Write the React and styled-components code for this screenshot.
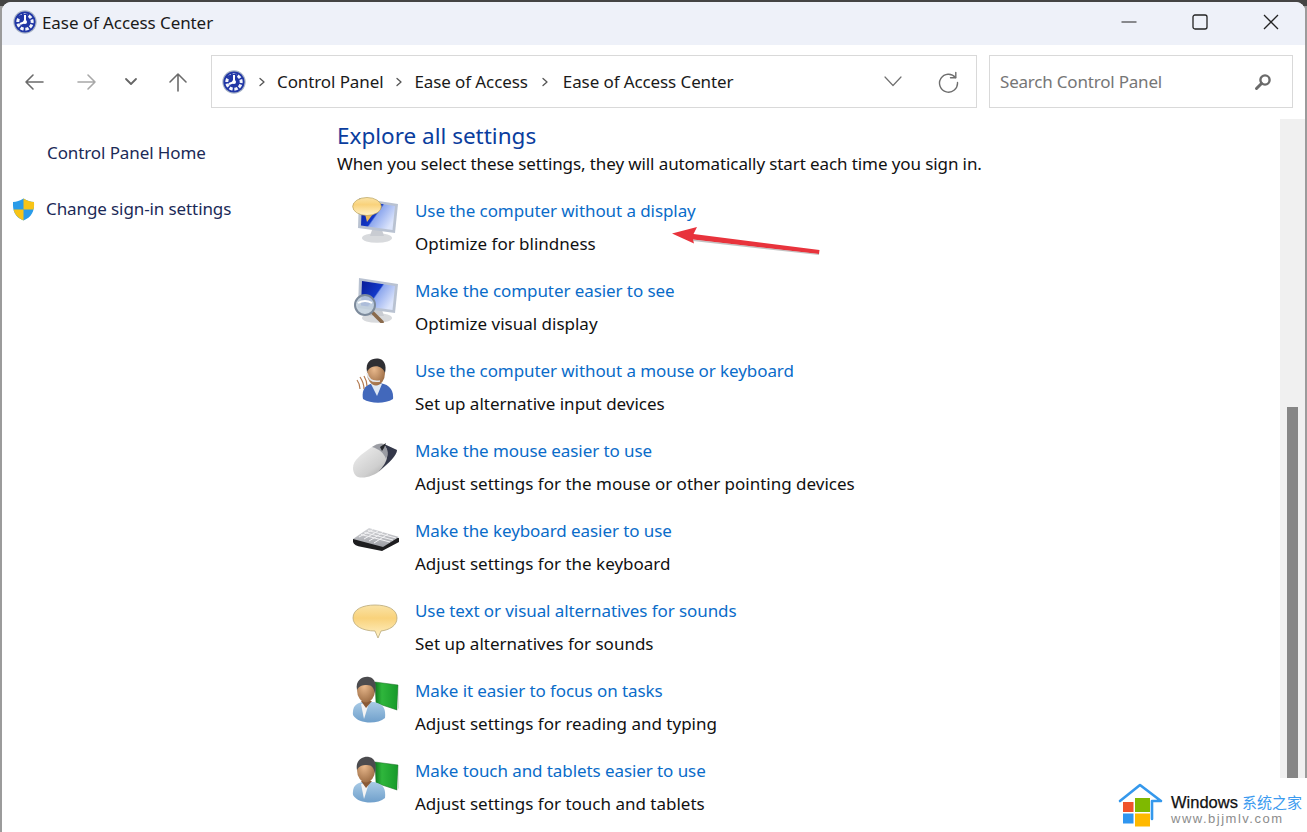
import React from "react";
import styled, { createGlobalStyle } from "styled-components";

const Global = createGlobalStyle`
  html, body { margin: 0; padding: 0; height: 100%; background: #4a4a4a; overflow: hidden; }
  #root { height: 100%; }
  * { box-sizing: border-box; }
`;
const font = `"Noto Sans", "Open Sans", "Liberation Sans", sans-serif`;

const Stage = styled.div`
  position: relative; width: 1307px; height: 832px; overflow: hidden;
  padding: 2px 2px 0 2px; background: linear-gradient(#444 0 6px, #9b9b9b 6px);
  font-family: ${font};
`;
const Win = styled.div`
  width: 100%; height: 100%; background: #fff; border-radius: 9px 9px 0 0; overflow: hidden;
  display: flex; flex-direction: column;
`;
const TitleBar = styled.div`
  height: 43px; flex: none; background: #eef1f9; display: flex; align-items: center; padding: 0 0 3px 11px;
`;
const TitleText = styled.div`
  font-size: 17px; color: #1a1a1a; margin-left: 5px; letter-spacing: -0.08px; flex: 1;
`;
const WinBtn = styled.div`
  width: 71px; height: 40px; display: flex; align-items: center; justify-content: center;
`;
const WinBtns = styled.div`
  display: flex; margin-right: -1px;
`;
const NavBar = styled.div`
  height: 74px; flex: none; display: flex; align-items: flex-start; padding: 10px 12px 0 0;
`;
const NavBtns = styled.div`
  width: 209px; height: 53px; flex: none; display: flex; align-items: center; padding-left: 12px; gap: 12px;
`;
const NavBtn = styled.div`
  flex: none; width: ${p => p.$w}px; height: 53px; display: flex; align-items: center; justify-content: center;
`;
const AddrBar = styled.div`
  width: 766px; height: 53px; flex: none; border: 1px solid #d9d9d9; display: flex; align-items: center; padding-left: 10px;
`;
const Crumb = styled.span`
  font-size: 17px; color: #1a1a1a; letter-spacing: -0.1px; white-space: nowrap;
`;
const Sep = styled.span`
  display: flex; width: ${p => p.$w || 33}px; justify-content: center; align-items: center;
`;
const AddrTools = styled.div`
  margin-left: auto; display: flex; align-items: center; gap: 35px; padding-right: 17px;
`;
const SearchBox = styled.div`
  width: 304px; height: 53px; margin-left: 12px; flex: none; border: 1px solid #d9d9d9; display: flex; align-items: center;
  justify-content: space-between; padding: 0 20px 0 10px;
`;
const SearchText = styled.span`
  font-size: 17px; color: #767676; letter-spacing: -0.2px;
`;
const Body = styled.div`
  flex: 1; min-height: 0; display: flex;
`;
const Sidebar = styled.div`
  width: 335px; flex: none; padding-top: 17px; display: flex; flex-direction: column;
`;
const SideHome = styled.div`
  font-size: 17px; color: #1b2a57; letter-spacing: -0.1px; padding-left: 45px; line-height: 34px;
`;
const SideLink = styled.div`
  display: flex; align-items: center; margin-top: 22px; padding-left: 10px; gap: 11px;
  font-size: 17px; color: #1b2a57; letter-spacing: -0.1px; line-height: 34px;
`;
const Main = styled.div`
  flex: 1; padding-top: 2px; min-width: 0;
`;
const Heading = styled.div`
  font-size: 22.5px; line-height: 29px; color: #0a3d9e;
`;
const Sub = styled.div`
  font-size: 17px; line-height: 28px; color: #111; letter-spacing: -0.1px; margin-bottom: 16px;
`;
const Rows = styled.div`
  display: flex; flex-direction: column; gap: 14px; padding-left: 15px;
`;
const Row = styled.div`
  display: flex; height: 66px;
`;
const IconCell = styled.div`
  width: 63px; flex: none; height: 48px; margin-top: 1px;
`;
const RowLink = styled.div`
  font-size: 17px; line-height: 33px; color: #0a6cc9; letter-spacing: -0.08px; white-space: nowrap;
`;
const RowDesc = styled.div`
  font-size: 17px; line-height: 33px; color: #111; white-space: nowrap;
`;
const Track = styled.div`
  width: 25px; flex: none; background: #f0f0f0; padding: 288px 7px 0 7px;
`;
const Thumb = styled.div`
  height: 100%; background: #868686;
`;
const ArrowLayer = styled.svg`
  position: absolute; left: 665px; top: 220px; width: 160px; height: 40px;
`;
const Mark = styled.div`
  position: absolute; right: 0; bottom: 0; width: 197px; height: 54px; background: linear-gradient(90deg, rgba(255,255,255,0), #fff 8px);
  display: flex; padding: 5px 0 0 8px;
`;
const MarkText = styled.div`
  margin-left: 8px; padding-top: 10px; display: flex; flex-direction: column;
`;
const MarkTop = styled.div`
  display: flex; align-items: baseline; white-space: nowrap; line-height: 18px;
`;
const MarkWin = styled.span`
  font-family: "Liberation Sans", sans-serif; font-size: 16.5px; color: #111;
  -webkit-text-stroke: 0.25px #111;
`;
const MarkCn = styled.span`
  font-family: "Noto Sans CJK SC", sans-serif; font-size: 15px; color: #3c9bef; margin-left: 4px;
`;
const MarkUrl = styled.span`
  font-family: "Liberation Sans", sans-serif; font-size: 13px; color: #8c8c8c; letter-spacing: 1.5px; line-height: 16px;
`;

const AccessIcon = () => (
  <svg width="24" height="24" viewBox="0 0 24 24" style={{ flex: "none" }}>
    <circle cx="12" cy="12" r="11.7" fill="#a9b4c6" />
    <circle cx="12" cy="12" r="10.6" fill="#2137a6" />
    <circle cx="12" cy="12" r="7.2" fill="none" stroke="#fff" strokeWidth="3" strokeDasharray="3.4 1.6" transform="rotate(20 12 12)" opacity=".95" />
    <path d="M4 6 L12 12 L15 3 Z" fill="#2137a6" />
    <path d="M12 5 V12 L7 14" fill="none" stroke="#fff" strokeWidth="2" />
    <circle cx="12" cy="12" r="2" fill="#fff" />
  </svg>
);

const Line = ({ d, c = "#6e6e6e", w = 1.6 }) => (
  <path d={d} fill="none" stroke={c} strokeWidth={w} strokeLinecap="round" strokeLinejoin="round" />
);
const Ico = ({ w = 20, h = 20, children }) => (
  <svg width={w} height={h} viewBox={`0 0 ${w} ${h}`}>{children}</svg>
);

const Defs = () => (
  <svg width="0" height="0" style={{ position: "absolute" }}>
    <defs>
      <linearGradient id="screen" x1="0" y1="0" x2="1" y2=".6">
        <stop offset="0" stopColor="#0a1c96" /><stop offset=".52" stopColor="#1238c8" /><stop offset=".56" stopColor="#8ea8ee" /><stop offset="1" stopColor="#dbe4fb" />
      </linearGradient>
      <linearGradient id="bubble" x1="0" y1="0" x2="0" y2="1">
        <stop offset="0" stopColor="#fae3a6" /><stop offset=".4" stopColor="#f9d27b" /><stop offset="1" stopColor="#fff2c8" />
      </linearGradient>
      <linearGradient id="silver" x1="0" y1="0" x2="1" y2="1">
        <stop offset="0" stopColor="#f4f4f4" /><stop offset=".6" stopColor="#cfcfcf" /><stop offset="1" stopColor="#8d8d8d" />
      </linearGradient>
      <linearGradient id="keys" x1="0" y1="0" x2="0" y2="1">
        <stop offset="0" stopColor="#d6d7da" /><stop offset="1" stopColor="#9c9ea4" />
      </linearGradient>
      <linearGradient id="shirt" x1="0" y1="0" x2="0" y2="1">
        <stop offset="0" stopColor="#a9cbe6" /><stop offset="1" stopColor="#6f9fcb" />
      </linearGradient>
      <linearGradient id="book" x1="0" y1="0" x2="1" y2="0">
        <stop offset="0" stopColor="#0d7a1e" /><stop offset=".3" stopColor="#2fb63c" /><stop offset="1" stopColor="#17992a" />
      </linearGradient>
      <radialGradient id="skin" cx=".4" cy=".35" r=".7">
        <stop offset="0" stopColor="#e9b98d" /><stop offset="1" stopColor="#9a6a42" />
      </radialGradient>
    </defs>
  </svg>
);

const Monitor = () => (
  <>
    <ellipse cx="25" cy="43" rx="15" ry="4.8" fill="#d8dadd" />
    <path d="M20 35 h10 l2 6 h-14 z" fill="#c9ccd2" />
    <path d="M7 3 L46 9 L43 38 L6 33 Z" fill="#b9c2d1" />
    <path d="M10 6 L43 11 L40.5 35 L9 30.5 Z" fill="url(#screen)" />
  </>
);
const BlindIcon = () => (
  <svg width="48" height="48" viewBox="0 0 48 48">
    <Monitor />
    <path d="M13 19 L15 27 L21 19 Z" fill="#e9b85a" />
    <ellipse cx="15" cy="11.5" rx="14.3" ry="9" fill="url(#bubble)" stroke="#b9a05a" strokeWidth=".7" />
  </svg>
);
const SeeIcon = () => (
  <svg width="48" height="48" viewBox="0 0 48 48">
    <Monitor />
    <path d="M21 38 L30 47" stroke="#8a6a4c" strokeWidth="3.6" strokeLinecap="round" />
    <circle cx="13" cy="30" r="10" fill="#c3d0dd" fillOpacity=".88" stroke="#7c8a9b" strokeWidth="2" />
    <path d="M6 28 q7 -4 14 0" stroke="#fff" strokeWidth="2" fill="none" />
  </svg>
);
const VoiceIcon = () => (
  <svg width="48" height="48" viewBox="0 0 48 48">
    <path d="M11 44 C9 33 15 28 25 28 C36 28 42 34 41 44 C33 49 19 49 11 44 Z" fill="#4268bb" />
    <path d="M19 29 L25 41 L30 29 Z" fill="#dfe8f4" />
    <ellipse cx="24" cy="18" rx="9" ry="12.5" fill="url(#skin)" />
    <path d="M15 17 C13 6 20 3 26 3.5 C32 4 35 10 33 18 C31 12 25 10 20 12 C17 13 16 15 15 17 Z" fill="#2f2f33" />
    <path d="M15 18 q2 10 13 8" fill="none" stroke="#e4e7ec" strokeWidth="1.5" />
    <path d="M12 21 q3 5 3 10 M8 22 q4 6 4 12 M5 25 q3 4 3 9" fill="none" stroke="#b3794e" strokeWidth="1.2" />
  </svg>
);
const MouseIcon = () => (
  <svg width="48" height="48" viewBox="0 0 48 48">
    <path d="M1 33 C1 25 10 19 17 14 C22 10 26 8 30 8 L45 15 C45 20 37 28 29 35 C22 41 12 44 6 42 C3 41 1 37 1 33 Z" fill="url(#silver)" />
    <path d="M32 9 L45 15 C45 20 37 28 27 36 C32 31 40 21 32 9 Z" fill="#34384a" />
    <path d="M20 12 C24 9 28 8 31 9 C36 13 37 18 34 24 C32 18 27 14 20 12 Z" fill="#9a9ca3" />
    <path d="M28 12 l6 -4 l-2 5 l-2 3 z" fill="#25272c" />
  </svg>
);
const KeyboardIcon = () => (
  <svg width="48" height="48" viewBox="0 0 48 48">
    <path d="M1 24 L1 27 Q2 31 10 32 L30 36 L47 27 L47 23 Z" fill="#1d1d1f" />
    <path d="M1 24 L17 13 L47 22 L31 32 Z" fill="url(#keys)" />
    <path d="M7 22 L21 14.5 M12 24 L26 16 M17 26 L31 17.5 M22 28 L36 19 M9 19.5 L38 27 M12.5 17.5 L41 25 M16 15.5 L44 23" stroke="#f2f2f4" strokeWidth="1" />
  </svg>
);
const BubbleIcon = () => (
  <svg width="48" height="48" viewBox="0 0 48 48">
    <path d="M23 10 C35 10 45 14 45 23 C45 31 37 35 29 36 L26 43 L23 36 C11 36 1 31 1 23 C1 14 11 10 23 10 Z" fill="url(#bubble)" stroke="#b9a878" strokeWidth=".8" />
  </svg>
);
const PersonBookIcon = () => (
  <svg width="48" height="48" viewBox="0 0 48 48">
    <path d="M23 7 L46 10 L45 35 L24 28 Z" fill="url(#book)" stroke="#1a6b24" strokeWidth=".5" />
    <path d="M45 36 L46.5 11 L47 33 Z" fill="#dcdcdc" />
    <path d="M1 40 C0 30 6 28 10 27 L22 27 C31 29 34 33 33 43 C25 50 6 49 1 40 Z" fill="url(#shirt)" />
    <path d="M9 29 L12 44 L17 28 Z" fill="#f3f3f3" />
    <path d="M9 26 L14 33 L20 26 Z" fill="#8a5a36" />
    <ellipse cx="14" cy="15" rx="9" ry="12.5" fill="url(#skin)" />
    <path d="M5 15 C3 5 11 1 17 2 C23 3 25 9 23 19 C22 13 20 10 15 10 C10 10 7 11 5 15 Z" fill="#4b4b4e" />
  </svg>
);

const rows = [
  [BlindIcon, "Use the computer without a display", "Optimize for blindness"],
  [SeeIcon, "Make the computer easier to see", "Optimize visual display"],
  [VoiceIcon, "Use the computer without a mouse or keyboard", "Set up alternative input devices"],
  [MouseIcon, "Make the mouse easier to use", "Adjust settings for the mouse or other pointing devices"],
  [KeyboardIcon, "Make the keyboard easier to use", "Adjust settings for the keyboard"],
  [BubbleIcon, "Use text or visual alternatives for sounds", "Set up alternatives for sounds"],
  [PersonBookIcon, "Make it easier to focus on tasks", "Adjust settings for reading and typing"],
  [PersonBookIcon, "Make touch and tablets easier to use", "Adjust settings for touch and tablets"],
];

const Chev = () => (
  <Ico w={8} h={12}><Line d="M2 2.5 L6 6 L2 9.5" c="#555" w={1.3} /></Ico>
);

export default function App() {
  return (
    <Stage>
      <Global />
      <Defs />
      <Win>
        <TitleBar>
          <AccessIcon />
          <TitleText>Ease of Access Center</TitleText>
          <WinBtns>
            <WinBtn><Ico w={16} h={4}><path d="M0.5 2 H15.5" stroke="#222" strokeWidth="1.2" /></Ico></WinBtn>
            <WinBtn><Ico w={16} h={16}><rect x="1" y="1" width="14" height="14" rx="2" fill="none" stroke="#222" strokeWidth="1.3" /></Ico></WinBtn>
            <WinBtn><Ico w={16} h={16}><path d="M1 1 L15 15 M15 1 L1 15" stroke="#222" strokeWidth="1.3" /></Ico></WinBtn>
          </WinBtns>
        </TitleBar>
        <NavBar>
          <NavBtns>
            <NavBtn $w={40}><Ico w={20} h={18}><Line d="M19 9 H2 M9 2 L2 9 L9 16" c="#6b6b6b" /></Ico></NavBtn>
            <NavBtn $w={41}><Ico w={20} h={18}><Line d="M1 9 H18 M11 2 L18 9 L11 16" c="#a8a8a8" /></Ico></NavBtn>
            <NavBtn $w={24}><Ico w={14} h={10}><Line d="M2 2 L7 7 L12 2" c="#666" w={1.8} /></Ico></NavBtn>
            <NavBtn $w={46}><Ico w={20} h={20}><Line d="M10 19 V2 M2 10 L10 2 L18 10" c="#6b6b6b" /></Ico></NavBtn>
          </NavBtns>
          <AddrBar>
            <AccessIcon />
            <Sep $w={31}><Chev /></Sep>
            <Crumb>Control Panel</Crumb>
            <Sep $w={31}><Chev /></Sep>
            <Crumb>Ease of Access</Crumb>
            <Sep $w={35}><Chev /></Sep>
            <Crumb>Ease of Access Center</Crumb>
            <AddrTools>
              <Ico w={18} h={11}><Line d="M1 1 L9 9.5 L17 1" c="#707070" w={1.2} /></Ico>
              <Ico w={22} h={22}>
                <Line d="M18.5 6.5 A9 9 0 1 0 20.5 11.5" c="#6e6e6e" w={1.4} />
                <Line d="M18.8 1.5 V6.8 H13.5" c="#6e6e6e" w={1.4} />
              </Ico>
            </AddrTools>
          </AddrBar>
          <SearchBox>
            <SearchText>Search Control Panel</SearchText>
            <Ico w={18} h={18}>
              <circle cx="11" cy="7" r="4.6" fill="none" stroke="#6a6a6a" strokeWidth="2.4" />
              <path d="M7.5 10.5 L2.5 15.5" stroke="#6a6a6a" strokeWidth="3" strokeLinecap="round" />
            </Ico>
          </SearchBox>
        </NavBar>
        <Body>
          <Sidebar>
            <SideHome>Control Panel Home</SideHome>
            <SideLink>
              <svg width="23" height="23" viewBox="0 0 23 23" style={{ flex: "none" }}>
                <path d="M11.5 0.5 C8 3 4.5 3.8 1 4 C0.5 13 3 19 11.5 22.5 C20 19 22.5 13 22 4 C18.5 3.8 15 3 11.5 0.5 Z" fill="#2a9be8" />
                <path d="M11.5 0.5 C15 3 18.5 3.8 22 4 C22.3 7 22 9.5 21.5 11.5 H11.5 Z" fill="#f8c416" />
                <path d="M11.5 11.5 H1.5 C2.8 16.5 6 20 11.5 22.5 Z" fill="#f8c416" />
              </svg>
              Change sign-in settings
            </SideLink>
          </Sidebar>
          <Main>
            <Heading>Explore all settings</Heading>
            <Sub>When you select these settings, they will automatically start each time you sign in.</Sub>
            <Rows>
              {rows.map(([I, l, d]) => (
                <Row key={l}>
                  <IconCell><I /></IconCell>
                  <div>
                    <RowLink>{l}</RowLink>
                    <RowDesc>{d}</RowDesc>
                  </div>
                </Row>
              ))}
            </Rows>
          </Main>
          <Track><Thumb /></Track>
        </Body>
      </Win>
      <ArrowLayer viewBox="0 0 160 40">
        <path d="M7 13.5 L32 7 L28.5 14 L154.5 30 L154 34 L28 19.5 L29 23.5 Z" fill="#e8333c" />
        <path d="M28 19.5 L154 34 L154 35 L28 21 Z" fill="#8f8f8f" opacity=".55" />
      </ArrowLayer>
      <Mark>
        <svg width="45" height="44" viewBox="0 0 45 44" style={{ flex: "none" }}>
          <path d="M2 18 L22 2 L43 18 H34 V36" fill="none" stroke="#3498ec" strokeWidth="2.6" strokeLinejoin="round" strokeLinecap="round" />
          <rect x="5" y="19" width="10.5" height="10" fill="#f0532b" />
          <rect x="17" y="15" width="15" height="14" fill="#7fb900" />
          <rect x="5" y="30.5" width="10.5" height="10" fill="#2f96f0" />
          <rect x="17" y="30.5" width="15" height="13" fill="#ffb900" />
        </svg>
        <MarkText>
          <MarkTop><MarkWin>Windows</MarkWin><MarkCn>系统之家</MarkCn></MarkTop>
          <MarkUrl>www.bjjmlv.com</MarkUrl>
        </MarkText>
      </Mark>
    </Stage>
  );
}
